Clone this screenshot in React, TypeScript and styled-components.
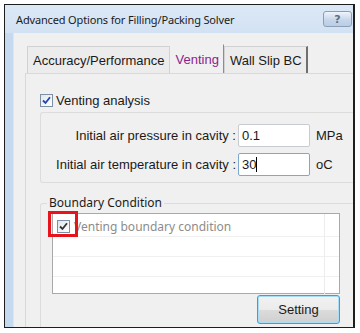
import styled, { createGlobalStyle } from 'styled-components'

const GlobalStyle = createGlobalStyle`
  html, body {
    margin: 0;
    padding: 0;
    background: #ffffff;
  }
  body {
    font-family: "Liberation Sans", Arial, sans-serif;
    font-size: 13px;
    color: #1a1a1a;
  }
`

const Page = styled.div`
  width: 360px;
  height: 333px;
  padding: 4px 0 0 4px;
  box-sizing: border-box;
`

const Window = styled.div`
  width: 351px;
  height: 324px;
  box-sizing: border-box;
  border: 1px solid #1e1e1e;
  border-right-width: 2px;
  background: #cfe0f2;
  display: flex;
  flex-direction: column;
  overflow: hidden;
`

const TitleBar = styled.div`
  height: 28px;
  flex: none;
  display: flex;
  align-items: center;
  justify-content: space-between;
  padding: 0 1px 0 11px;
  background: linear-gradient(#dbe8f6, #d3e2f3);
`

const Title = styled.span`
  font-family: "Noto Sans", "Open Sans", sans-serif;
  font-size: 11px;
  color: #1b1b1b;
  letter-spacing: -0.15px;
`

const HelpButton = styled.div`
  width: 29px;
  height: 16px;
  box-sizing: border-box;
  border: 1px solid #8a9fb6;
  border-radius: 3px;
  background: linear-gradient(#eef4fa, #c7d7ea 55%, #b9cde4);
  display: flex;
  align-items: center;
  justify-content: center;
  font-family: "DejaVu Sans", sans-serif;
  font-weight: bold;
  font-size: 11px;
  color: #5b6f86;
`

const Body = styled.div`
  flex: 1;
  display: flex;
  min-height: 0;
`

const FrameStrip = styled.div`
  width: 8px;
  flex: none;
  background: #c5daef;
`

const Client = styled.div`
  flex: 1;
  background: #f0f0f0;
  border-left: 1px solid #dfe6ee;
  padding: 9px 0 0 11px;
  display: flex;
  flex-direction: column;
  min-width: 0;
`

const TabStrip = styled.div`
  display: flex;
  align-items: flex-end;
  height: 31px;
  padding-left: 2px;
`

const Tab = styled.div<{ $active?: boolean }>`
  height: ${p => (p.$active ? 29 : 27)}px;
  box-sizing: border-box;
  padding: 0 4px 0 5px;
  display: flex;
  align-items: center;
  font-size: 13px;
  color: ${p => (p.$active ? '#8a1f8f' : '#1a1a1a')};
  background: ${p => (p.$active ? '#f0f0f0' : '#ececec')};
  border: 1px solid ${p => (p.$active ? 'transparent' : '#d2d2d2')};
  border-bottom: none;
  border-right: 1px solid ${p => (p.$active ? '#8d8d8d' : '#d2d2d2')};
  &:last-child {
    border-right: 2px solid #6f6f6f;
  }
`

const Panel = styled.div`
  flex: 1;
  border-left: 1px solid #d9d9d9;
  border-top: 1px solid #d9d9d9;
  margin-right: -4px;
  padding: 18px 0 0 14px;
  display: flex;
  flex-direction: column;
`

const CheckRow = styled.label`
  display: flex;
  align-items: center;
  gap: 3px;
  height: 16px;
  font-size: 13px;
`

const CheckBox = styled.span`
  width: 13px;
  height: 13px;
  box-sizing: border-box;
  border: 1px solid #7f8fa3;
  background: linear-gradient(135deg, #dfe6ee, #ffffff);
  display: flex;
  align-items: center;
  justify-content: center;
  flex: none;
`

const Fieldset = styled.div`
  margin-top: 4px;
  border: 1px solid #dcdcdc;
  border-right: none;
  border-radius: 3px 0 0 3px;
  height: 71px;
  box-sizing: border-box;
  padding: 11px 0 0 0;
  display: flex;
  flex-direction: column;
  gap: 6px;
`

const FieldRow = styled.div`
  display: flex;
  align-items: center;
  height: 23px;
`

const FieldLabel = styled.span`
  width: 197px;
  text-align: right;
  padding-right: 2px;
  box-sizing: border-box;
`

const TextInput = styled.div<{ $focused?: boolean }>`
  width: 72px;
  height: 23px;
  box-sizing: border-box;
  border: 1px solid ${p => (p.$focused ? '#7fa8cf' : '#c8ccd2')};
  border-radius: 2px;
  background: #ffffff;
  padding: 3px 0 0 3px;
  font-size: 13px;
  display: flex;
  align-items: flex-start;
`

const Caret = styled.span`
  width: 1px;
  height: 15px;
  background: #000;
`

const Unit = styled.span`
  margin-left: 6px;
`

const BoundaryGroup = styled.div`
  margin-top: 20px;
  flex: 1;
  position: relative;
  border: 1px solid #dcdcdc;
  border-right: none;
  border-bottom: none;
  border-radius: 3px 0 0 0;
  padding: 9px 0 0 11px;
  display: flex;
  flex-direction: column;
`

const GroupLegend = styled.span`
  position: absolute;
  top: -10px;
  left: 6px;
  padding: 0 2px;
  background: #f0f0f0;
  font-family: "Noto Sans", "Open Sans", sans-serif;
  font-size: 12px;
  color: #1a1a1a;
`

const ListBox = styled.div`
  width: 288px;
  height: 81px;
  box-sizing: border-box;
  border: 1px solid #a9a9a9;
  background: #ffffff;
  display: flex;
  flex-direction: column;
`

const ListRow = styled.div`
  height: 19px;
  flex: none;
  display: flex;
  border-bottom: 1px solid #f0f0f0;
  &:first-child {
    height: 22px;
  }
`

const ListCell = styled.div`
  flex: 1;
  display: flex;
  align-items: center;
  padding: 3px 0 0 4px;
  gap: 4px;
  font-family: "Noto Sans", "Open Sans", sans-serif;
  font-size: 12px;
  color: #8c8c8c;
  position: relative;
`

const EndCell = styled.div`
  width: 14px;
  border-left: 1px solid #ececec;
`

const Highlight = styled.span`
  position: absolute;
  left: -5px;
  top: -3px;
  width: 30px;
  height: 26px;
  box-sizing: border-box;
  border: 3px solid #e8141b;
`

const ButtonRow = styled.div`
  display: flex;
  justify-content: flex-end;
  width: 288px;
  padding-top: 1px;
`

const Button = styled.button`
  width: 83px;
  height: 29px;
  box-sizing: border-box;
  border: 1px solid #3c9fd8;
  border-radius: 3px;
  box-shadow: inset 0 0 0 1px #a9dcf5;
  background: linear-gradient(#f2f2f2, #ebebeb 50%, #dcdcdc 51%, #cfcfcf);
  font-family: "Liberation Sans", Arial, sans-serif;
  font-size: 13px;
  color: #1a1a1a;
  padding: 0;
`

const Check = ({ color = '#2346a8' }: { color?: string }) => (
  <svg width="9" height="9" viewBox="0 0 9 9">
    <path d="M1 4.5 L3.5 7 L8 1.2" fill="none" stroke={color} strokeWidth="1.8" />
  </svg>
)

export default function App() {
  return (
    <>
      <GlobalStyle />
      <Page>
        <Window>
          <TitleBar>
            <Title>Advanced Options for Filling/Packing Solver</Title>
            <HelpButton>?</HelpButton>
          </TitleBar>
          <Body>
            <FrameStrip />
            <Client>
              <TabStrip>
                <Tab>Accuracy/Performance</Tab>
                <Tab $active>Venting</Tab>
                <Tab>Wall Slip BC</Tab>
              </TabStrip>
              <Panel>
                <CheckRow>
                  <CheckBox>
                    <Check />
                  </CheckBox>
                  Venting analysis
                </CheckRow>
                <Fieldset>
                  <FieldRow>
                    <FieldLabel>Initial air pressure in cavity :</FieldLabel>
                    <TextInput>0.1</TextInput>
                    <Unit>MPa</Unit>
                  </FieldRow>
                  <FieldRow>
                    <FieldLabel>Initial air temperature in cavity :</FieldLabel>
                    <TextInput $focused>
                      30
                      <Caret />
                    </TextInput>
                    <Unit>oC</Unit>
                  </FieldRow>
                </Fieldset>
                <BoundaryGroup>
                  <GroupLegend>Boundary Condition</GroupLegend>
                  <ListBox>
                    <ListRow>
                      <ListCell>
                        <CheckBox>
                          <Check color="#333" />
                        </CheckBox>
                        Venting boundary condition
                        <Highlight />
                      </ListCell>
                      <EndCell />
                    </ListRow>
                    <ListRow>
                      <ListCell />
                      <EndCell />
                    </ListRow>
                    <ListRow>
                      <ListCell />
                      <EndCell />
                    </ListRow>
                    <ListRow>
                      <ListCell />
                      <EndCell />
                    </ListRow>
                  </ListBox>
                  <ButtonRow>
                    <Button>Setting</Button>
                  </ButtonRow>
                </BoundaryGroup>
              </Panel>
            </Client>
          </Body>
        </Window>
      </Page>
    </>
  )
}
